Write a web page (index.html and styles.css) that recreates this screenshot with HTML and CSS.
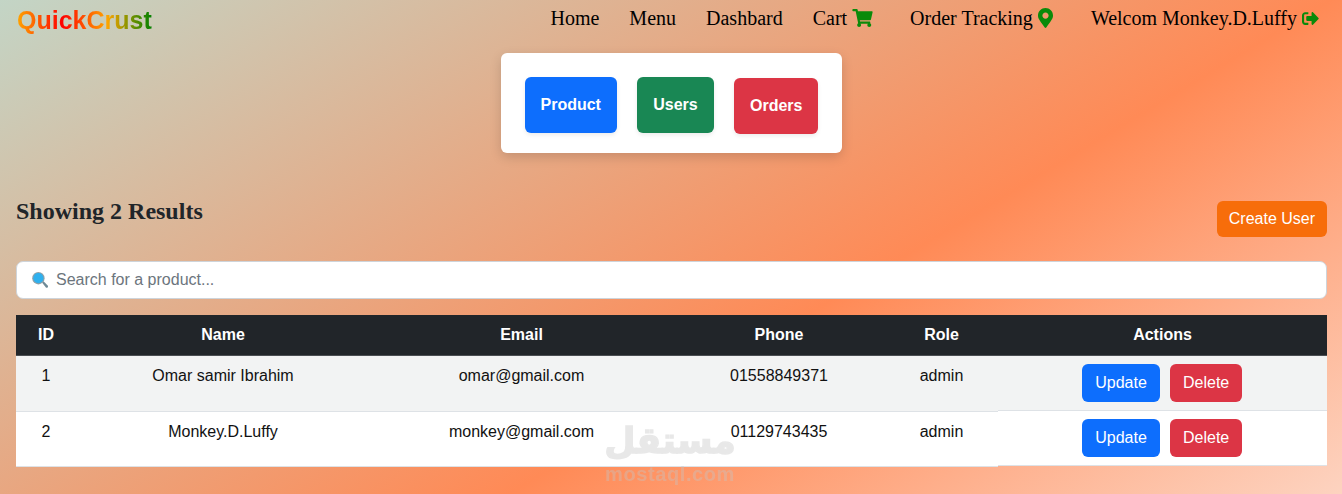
FILE: index.html
```html
<!DOCTYPE html>
<html lang="en">

<head>
    <meta charset="UTF-8">
    <meta name="viewport" content="width=device-width, initial-scale=1.0">
    <title>QuickCrust</title>
    <link rel="stylesheet" href="styles.css">
</head>

<body>
    <nav class="navbar">
        <a class="logo" href="#">QuickCrust</a>
        <ul class="navLinks">
            <li><a href="#">Home</a></li>
            <li><a href="#">Menu</a></li>
            <li><a href="#">Dashbard</a></li>
            <li class="withIcon"><a href="#">Cart</a>
                <svg class="navIcon cartIcon" viewBox="0 0 576 512"><path d="M528.12 301.319l47.273-208C578.806 78.301 567.391 64 551.99 64H159.208l-9.166-44.81C147.758 8.021 137.93 0 126.529 0H24C10.745 0 0 10.745 0 24v16c0 13.255 10.745 24 24 24h69.883l70.248 343.435C147.325 417.1 136 435.222 136 456c0 30.928 25.072 56 56 56s56-25.072 56-56c0-15.674-6.447-29.835-16.824-40h209.647C430.447 426.165 424 440.326 424 456c0 30.928 25.072 56 56 56s56-25.072 56-56c0-22.172-12.888-41.332-31.579-50.405l5.517-24.276c3.413-15.018-8.002-29.319-23.403-29.319H218.117l-6.545-32h293.145c11.206 0 20.92-7.754 23.403-18.681z"/></svg>
            </li>
            <li class="withIcon trackItem"><a href="#">Order Tracking</a>
                <svg class="navIcon markerIcon" viewBox="0 0 384 512"><path d="M172.268 501.67C26.97 291.031 0 269.413 0 192 0 85.961 85.961 0 192 0s192 85.961 192 192c0 77.413-26.97 99.031-172.268 309.67-9.535 13.774-29.93 13.773-39.464 0zM192 272c44.183 0 80-35.817 80-80s-35.817-80-80-80-80 35.817-80 80 35.817 80 80 80z"/></svg>
            </li>
            <li><a href="#">Welcom Monkey.D.Luffy</a>
                <svg class="navIcon logoutIcon" viewBox="0 0 512 512"><path d="M497 273L329 441c-15 15-41 4.5-41-17v-96H152c-13.3 0-24-10.7-24-24v-96c0-13.3 10.7-24 24-24h136V88c0-21.4 25.9-32 41-17l168 168c9.3 9.4 9.3 24.6 0 34zM192 436v-40c0-6.6-5.4-12-12-12H96c-17.7 0-32-14.3-32-32V160c0-17.7 14.3-32 32-32h84c6.6 0 12-5.4 12-12V76c0-6.6-5.4-12-12-12H96c-53 0-96 43-96 96v192c0 53 43 96 96 96h84c6.6 0 12-5.4 12-12z"/></svg>
            </li>
        </ul>
    </nav>

    <div class="panelWrap">
        <div class="panel">
            <button class="panelBtn blue">Product</button>
            <button class="panelBtn green usersBtn">Users</button>
            <button class="panelBtn red ordersBtn">Orders</button>
        </div>
    </div>

    <main class="content">
        <div class="resultsHead">
            <h2>Showing 2 Results</h2>
            <button class="btn orange">Create User</button>
        </div>

        <div class="searchBox">
            <svg class="searchIcon" viewBox="0 0 16 16">
                <path d="M10 10.6l1.5-1.4 4.2 4.4c.5.6.4 1.3-.1 1.8s-1.2.5-1.7 0z" fill="#6f8a96"/>
                <circle cx="6.4" cy="6.2" r="6.2" fill="#8fa0a8"/>
                <circle cx="6.4" cy="6.2" r="5.1" fill="#2fb0ee"/>
            </svg>
            <input type="text" placeholder="Search for a product...">
        </div>

        <table class="usersTable">
            <colgroup>
                <col class="colId">
                <col class="colName">
                <col class="colEmail">
                <col class="colPhone">
                <col class="colRole">
                <col class="colActions">
            </colgroup>
            <thead>
                <tr><th>ID</th><th>Name</th><th>Email</th><th>Phone</th><th>Role</th><th>Actions</th></tr>
            </thead>
            <tbody>
                <tr>
                    <td>1</td>
                    <td>Omar samir Ibrahim</td>
                    <td>omar@gmail.com</td>
                    <td>01558849371</td>
                    <td>admin</td>
                    <td class="actions"><button class="btn blue updateBtn">Update</button><button class="btn red deleteBtn">Delete</button></td>
                </tr>
                <tr>
                    <td>2</td>
                    <td>Monkey.D.Luffy</td>
                    <td>monkey@gmail.com</td>
                    <td>01129743435</td>
                    <td>admin</td>
                    <td class="actions"><button class="btn blue updateBtn">Update</button><button class="btn red deleteBtn">Delete</button></td>
                </tr>
            </tbody>
        </table>
    </main>

    <div class="watermark">
        <span class="wmArabic" lang="ar" dir="rtl">مستقل</span>
        <span class="wmLatin">mostaql.com</span>
    </div>
</body>
</html>
```

FILE: styles.css
```css
* {
    box-sizing: border-box;
}

body {
    margin: 0;
    position: relative;
    height: 494px;
    overflow: hidden;
    background: linear-gradient(149deg, #c3d5c6 0%, #ff8a56 61.5%, #fdd3c0 100%);
    font-family: "Liberation Sans", Arial, sans-serif;
    font-size: 16px;
    color: #212529;
}

.navbar {
    display: flex;
    justify-content: space-between;
    align-items: center;
    height: 36px;
    padding: 0 23px 0 17px;
}

.logo {
    margin-top: 5px;
    font-size: 25px;
    font-weight: bold;
    text-decoration: none;
    background: linear-gradient(90deg, orange, red, orange, green);
    -webkit-background-clip: text;
    background-clip: text;
    color: transparent;
}

.navLinks {
    display: flex;
    gap: 30px;
    margin: 0;
    padding: 0;
    list-style: none;
    font-family: "Liberation Serif", "Times New Roman", serif;
    font-size: 20px;
}

.navLinks li {
    display: flex;
    align-items: center;
    gap: 5px;
}

.navLinks .withIcon {
    margin-right: 7px;
}

.navLinks .trackItem {
    margin-right: 8px;
}

.navLinks a {
    color: #000;
    text-decoration: none;
}

.navIcon {
    fill: #0a8a0a;
}

.cartIcon {
    width: 21px;
    height: 18px;
}

.markerIcon {
    width: 15px;
    height: 20px;
}

.logoutIcon {
    width: 17px;
    height: 17px;
}

.panelWrap {
    display: flex;
    justify-content: center;
    margin-top: 17px;
}

.panel {
    display: flex;
    align-items: flex-start;
    gap: 20px;
    width: 341px;
    height: 100px;
    padding: 24px;
    background-color: #fff;
    border-radius: 6px;
    box-shadow: 0 4px 12px rgba(0, 0, 0, 0.15);
}

.panelBtn {
    flex: none;
    height: 56px;
    padding: 0 16px;
    border: none;
    border-radius: 6px;
    font-family: inherit;
    font-size: 16px;
    font-weight: bold;
    color: #fff;
    box-shadow: 0 2px 4px rgba(0, 0, 0, 0.08);
}

.usersBtn {
    width: 77px;
}

.ordersBtn {
    width: 84px;
    margin-top: 1px;
}

.blue { background-color: #0d6efd; }
.green { background-color: #198754; }
.red { background-color: #dc3545; }
.orange { background-color: #f76d0a; }

.content {
    padding: 44px 15px 0 16px;
}

.resultsHead {
    display: flex;
    justify-content: space-between;
    align-items: flex-start;
    margin-bottom: 24px;
}

.resultsHead h2 {
    margin: 0;
    font-family: "Liberation Serif", "Times New Roman", serif;
    font-size: 24px;
    line-height: 29px;
    font-weight: bold;
}

.btn {
    height: 38px;
    padding: 0 12px;
    border: 1px solid transparent;
    border-radius: 6px;
    font-family: inherit;
    font-size: 16px;
    color: #fff;
}

.resultsHead .btn {
    height: 36px;
    margin-top: 4px;
    border: none;
}

.updateBtn {
    width: 78px;
}

.deleteBtn {
    width: 72px;
}

.searchBox {
    display: flex;
    align-items: center;
    gap: 8px;
    height: 38px;
    margin-bottom: 16px;
    padding-left: 15px;
    background-color: #fff;
    border: 1px solid #ced4da;
    border-radius: 7px;
}

.searchIcon {
    flex: none;
    width: 16px;
    height: 16px;
}

.searchBox input {
    flex: 1;
    border: none;
    outline: none;
    background: none;
    padding: 0;
    font-family: inherit;
    font-size: 16px;
    color: #212529;
}

.searchBox input::placeholder {
    color: #6c757d;
    opacity: 1;
}

.usersTable {
    width: 1311px;
    table-layout: fixed;
    border-collapse: separate;
    border-spacing: 0;
    line-height: 24px;
}

.colId { width: 60px; }
.colName { width: 294px; }
.colEmail { width: 303px; }
.colPhone { width: 212px; }
.colRole { width: 113px; }
.colActions { width: 329px; }

.usersTable th {
    padding: 8px;
    height: 41px;
    background-color: #212529;
    border-bottom: 1px solid #4a4e52;
    color: #fff;
    font-weight: bold;
    text-align: center;
}

.usersTable td {
    padding: 8px;
    height: 55px;
    text-align: center;
    vertical-align: top;
    color: #111;
    background-color: #fff;
    border-bottom: 1px solid #dee2e6;
}

.usersTable tbody tr:first-child td {
    background-color: #f2f3f3;
    border-bottom-color: #f2f3f3;
}

.usersTable tbody tr:first-child td.actions {
    border-bottom-color: #dee2e6;
}

/* the left five columns sit one pixel lower than Actions */
.usersTable tbody tr:last-child td {
    border-top: 1px solid #dee2e6;
    border-bottom: none;
    box-shadow: 0 1px 0 #dee2e6;
}

.usersTable tbody tr:last-child td.actions {
    border-top: none;
    border-bottom: 1px solid #dee2e6;
    box-shadow: none;
}

.usersTable td.actions {
    padding-right: 9px;
    white-space: nowrap;
}

.actions .btn + .btn {
    margin-left: 10px;
}

.watermark {
    position: absolute;
    left: 590px;
    top: 418px;
    width: 160px;
    display: flex;
    flex-direction: column;
    align-items: center;
    color: #c5c5c5;
    opacity: 0.38;
    pointer-events: none;
}

.wmArabic {
    font-family: "DejaVu Sans", sans-serif;
    font-size: 36px;
    font-weight: bold;
    line-height: 46px;
    -webkit-text-stroke: 1.5px #c5c5c5;
}

.wmLatin {
    font-family: "Liberation Sans", Arial, sans-serif;
    font-size: 20px;
    font-weight: bold;
    line-height: 20px;
    letter-spacing: 0.6px;
}
```
